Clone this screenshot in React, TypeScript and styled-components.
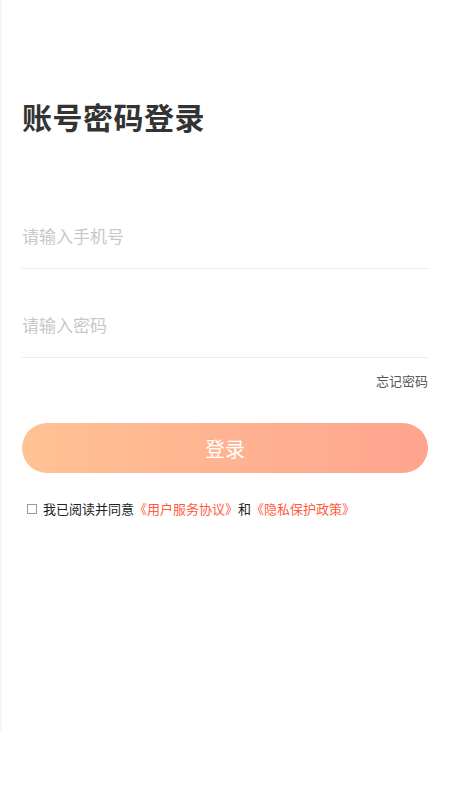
import styled, { createGlobalStyle } from 'styled-components'

const GlobalStyle = createGlobalStyle`
  html, body {
    margin: 0;
    padding: 0;
    background: #fff;
  }
  body {
    font-family: "Noto Sans CJK SC", "Noto Sans", sans-serif;
  }
  * {
    box-sizing: border-box;
  }
`

const App = () => {
  return (
    <>
      <GlobalStyle />
      <Page>
        <Title>账号密码登录</Title>

        <Field>
          <Input type="tel" placeholder="请输入手机号" />
        </Field>
        <Field>
          <Input type="password" placeholder="请输入密码" />
        </Field>

        <ForgotRow>
          <ForgotLink>忘记密码</ForgotLink>
        </ForgotRow>

        <LoginButton>登录</LoginButton>

        <Agreement>
          <CheckBox />
          <span>我已阅读并同意</span>
          <Link>《用户服务协议》</Link>
          <span>和</span>
          <Link>《隐私保护政策》</Link>
        </Agreement>
      </Page>
    </>
  )
}

export default App

const Page = styled.div`
  min-height: 732px;
  padding: 98px 22px 0 20px;
  border-left: 2px solid #f6f6f6;
  display: flex;
  flex-direction: column;
`
const Title = styled.h1`
  margin: 0;
  font-size: 30px;
  line-height: 36px;
  font-weight: 700;
  color: #333;
  letter-spacing: 0.5px;
`
const Field = styled.div`
  height: 89px;
  display: flex;
  align-items: flex-end;
  border-bottom: 1px solid #ececec;

  &:first-of-type {
    margin-top: 46px;
  }
`
const Input = styled.input`
  width: 100%;
  height: 66px;
  border: none;
  outline: none;
  padding: 0;
  font-family: inherit;
  font-size: 17px;
  color: #333;
  background: transparent;

  &::placeholder {
    color: #c8c8c8;
  }
`
const ForgotRow = styled.div`
  display: flex;
  justify-content: flex-end;
  margin-top: 14px;
`
const ForgotLink = styled.span`
  font-size: 13px;
  line-height: 18px;
  color: #555;
`
const LoginButton = styled.button`
  margin-top: 33px;
  height: 50px;
  width: 100%;
  border: none;
  border-radius: 25px;
  background: linear-gradient(90deg, #ffc294 0%, #ffa48e 100%);
  color: #fff;
  font-family: inherit;
  font-size: 20px;
  cursor: pointer;
`
const Agreement = styled.div`
  margin-top: 27px;
  padding-left: 5px;
  display: flex;
  align-items: center;
  font-size: 13px;
  line-height: 18px;
  color: #222;
`
const CheckBox = styled.span`
  width: 10px;
  height: 10px;
  border: 1px solid #999;
  margin-right: 6px;
  flex-shrink: 0;
`
const Link = styled.span`
  color: #ff5b3f;
`
